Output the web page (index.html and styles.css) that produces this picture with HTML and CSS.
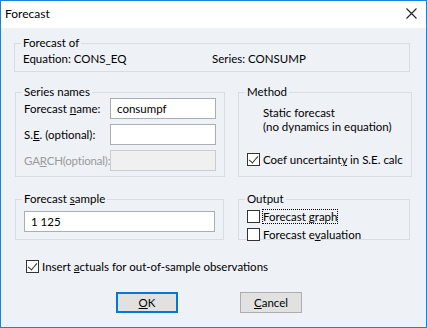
FILE: index.html
```html
<!DOCTYPE html>
<html>
<head>
<meta charset="utf-8">
<title>Forecast</title>
<link rel="stylesheet" href="styles.css">
</head>
<body>
<div class="window">
  <div class="titlebar">
    <span class="title">Forecast</span>
    <svg class="close" width="11" height="11" viewBox="0 0 11 11"><path d="M0.5 0.5 L10.5 10.5 M10.5 0.5 L0.5 10.5" stroke="#222" stroke-width="1.1" fill="none"/></svg>
  </div>
  <div class="content">
    <fieldset class="group group-of">
      <legend>Forecast of</legend>
      <div class="of-row">
        <span class="of-eq">Equation: CONS_EQ</span>
        <span>Series: CONSUMP</span>
      </div>
    </fieldset>

    <div class="cols">
      <fieldset class="group group-names">
        <legend>Series names</legend>
        <div class="field">
          <label>Forecast <u>n</u>ame:</label>
          <input type="text" value="consumpf">
        </div>
        <div class="field">
          <label>S.<u>E</u>. (optional):</label>
          <input type="text" value="">
        </div>
        <div class="field disabled">
          <label>GA<u>R</u>CH(optional):</label>
          <input type="text" value="" disabled>
        </div>
      </fieldset>

      <fieldset class="group group-method">
        <legend>Method</legend>
        <div class="method-text">Static forecast<br>(no dynamics in equation)</div>
        <div class="check"><span class="box checked"></span><span>Coef uncertaint<u>y</u> in S.E. calc</span></div>
      </fieldset>

      <fieldset class="group group-sample">
        <legend>Forecast <u>s</u>ample</legend>
        <input type="text" class="sample" value="1 125">
      </fieldset>

      <fieldset class="group group-output">
        <legend>Output</legend>
        <div class="check"><span class="box"></span><span class="focus">Forecast <u>g</u>raph</span></div>
        <div class="check"><span class="box"></span><span>Forecast e<u>v</u>aluation</span></div>
      </fieldset>
    </div>

    <div class="check actuals"><span class="box checked"></span><span>Insert <u>a</u>ctuals for out-of-sample observations</span></div>

    <div class="buttons">
      <button class="btn default"><u>O</u>K</button>
      <button class="btn"><u>C</u>ancel</button>
    </div>
  </div>
</div>
</body>
</html>
```

FILE: styles.css
```css
html, body {
  margin: 0;
  padding: 0;
}
body {
  font-family: "Segoe UI", Lato, "Noto Sans", sans-serif;
  font-size: 11.5px;
  color: #000;
}
.window {
  width: 427px;
  height: 328px;
  box-sizing: border-box;
  border: 1px solid #1883d7;
  background-color: #eef1f6;
  display: flex;
  flex-direction: column;
}
.titlebar {
  height: 25px;
  background-color: #fff;
  display: flex;
  align-items: center;
  justify-content: space-between;
  padding: 0 9px 2px 4px;
}
.title {
  font-size: 12px;
}
.close {
  display: block;
}
.content {
  padding: 7px 16px 0 13px;
}
.group {
  margin: 0;
  border: 1px solid #d9dde3;
  padding: 0 8px;
  box-sizing: border-box;
}
.group legend {
  padding: 0 2px;
  margin-left: -2px;
  line-height: 16px;
}
.group-of {
  height: 37px;
}
.of-row {
  display: flex;
  padding-top: 0;
  line-height: 16px;
}
.of-eq {
  width: 189px;
}
.cols {
  display: grid;
  grid-template-columns: 204px 172px;
  column-gap: 19px;
  row-gap: 14px;
  margin-top: 12px;
  margin-left: 1px;
}
.group-names, .group-method {
  height: 93px;
}
.field {
  display: flex;
  align-items: center;
  height: 21px;
  margin-bottom: 5px;
  margin-top: 0;
}
.field:first-of-type {
  margin-top: -2px;
}
.field label {
  width: 86px;
  white-space: nowrap;
}
.field input {
  width: 106px;
}
input[type=text] {
  height: 21px;
  box-sizing: border-box;
  border: 1px solid #abadb3;
  background-color: #fff;
  font-family: inherit;
  font-size: 11.5px;
  padding: 0 6px;
  margin: 0;
  outline: none;
}
.disabled label {
  color: #9a9a9a;
  letter-spacing: -0.2px;
}
input[type=text]:disabled {
  background-color: #f0f0f0;
  border-color: #cccccc;
}
.method-text {
  padding-left: 16px;
  line-height: 14px;
  margin-top: 6px;
  height: 45px;
}
.check {
  display: flex;
  align-items: center;
  height: 17px;
  white-space: nowrap;
}
.box {
  width: 13px;
  height: 13px;
  box-sizing: border-box;
  border: 1px solid #333;
  background-color: #fff;
  margin-right: 3px;
  position: relative;
  flex: none;
}
.box.checked::after {
  content: "";
  position: absolute;
  left: 3px;
  top: 0px;
  width: 4px;
  height: 8px;
  border: solid #333;
  border-width: 0 1px 1px 0;
  transform: rotate(40deg);
}
.focus {
  outline: 1px dotted #000;
}
.group-sample, .group-output {
  height: 49px;
}
.sample {
  width: 191px;
  margin-top: 4px !important;
}
.group-output .check {
  height: 18px;
}
.actuals {
  margin-top: 18px;
  margin-left: 12px;
}
.buttons {
  display: flex;
  margin-top: 17px;
  padding-left: 102px;
  gap: 62px;
}
.btn {
  width: 62px;
  height: 21px;
  font-family: inherit;
  font-size: 11.5px;
  background-color: #e1e1e1;
  border: 1px solid #adadad;
  padding: 0;
  color: #000;
}
.btn.default {
  border: 2px solid #0078d7;
}
```
